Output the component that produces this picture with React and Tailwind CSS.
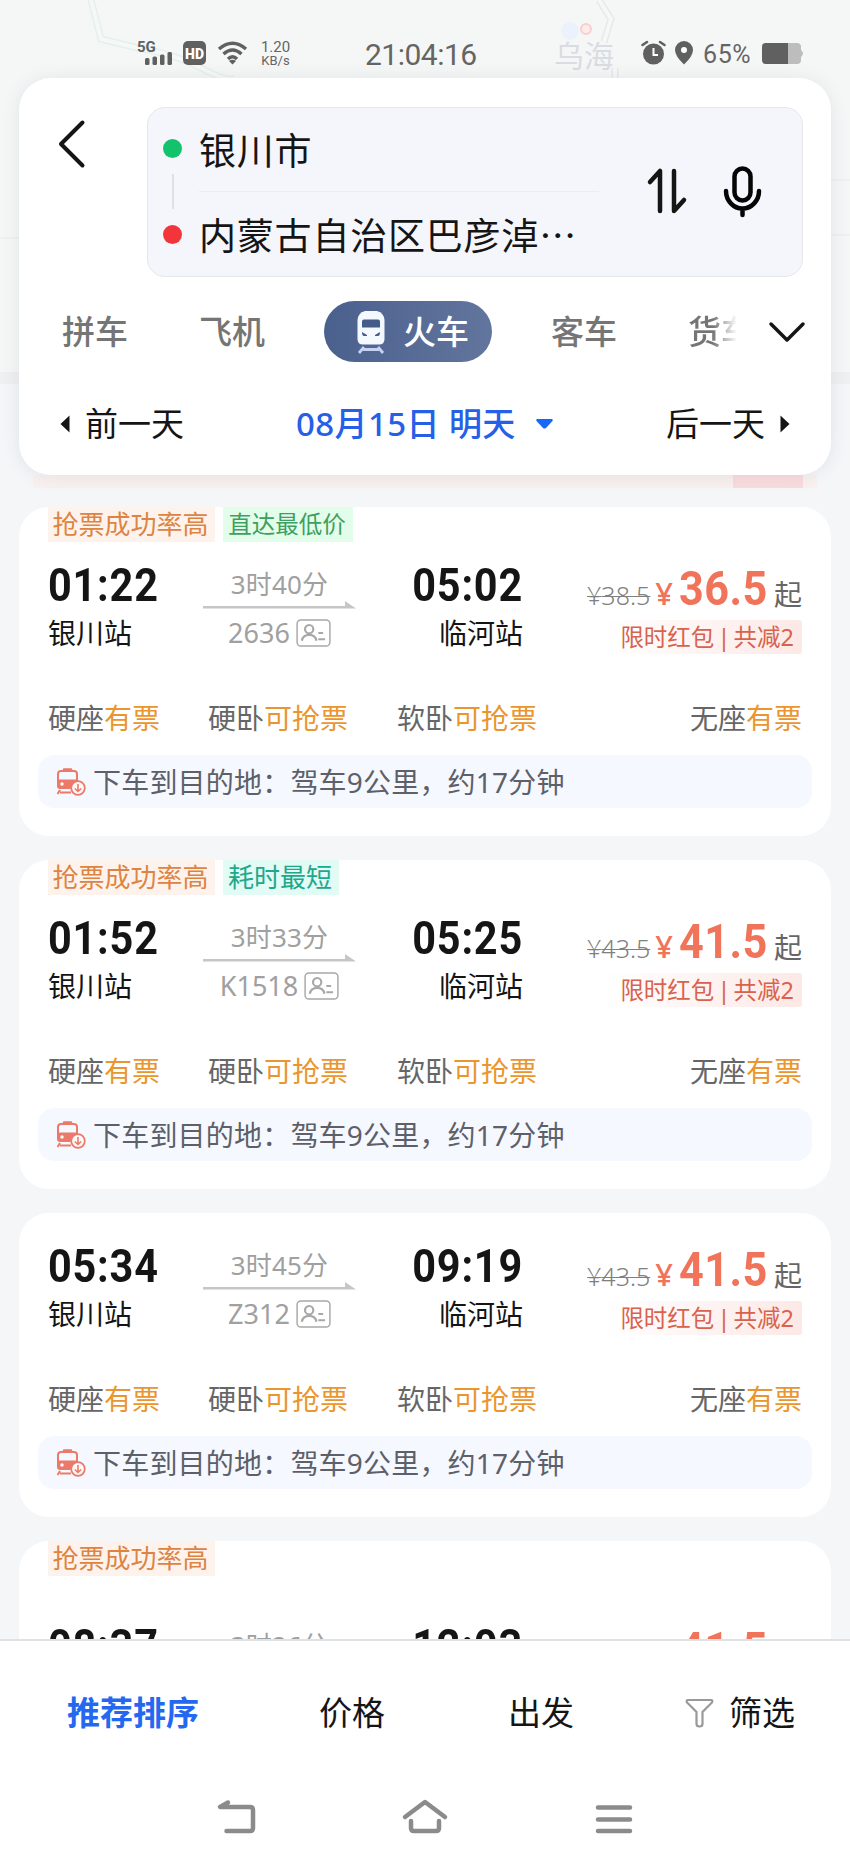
import React from 'react';

const GRAB_TAG = { text: '抢票成功率高', className: 'w-[167px] bg-[#fef3ec] pr-[2px] text-[#dd8443] text-[26px]' };

const seats = [
  { type: '硬座', status: '有票', className: '' },
  { type: '硬卧', status: '可抢票', className: 'ml-[48px]' },
  { type: '软卧', status: '可抢票', className: 'ml-[49px]' },
  { type: '无座', status: '有票', className: 'ml-auto' },
];

const trains = [
  {
    id: '2636',
    depart: '01:22',
    arrive: '05:02',
    duration: '3时40分',
    oldPrice: '38.5',
    price: '36.5',
    tags: [GRAB_TAG, { text: '直达最低价', className: 'w-[130px] bg-[#e2fdea] pr-[2px] text-[#3f9f5f] text-[23.5px]' }],
    spacing: 'h-[23px]',
  },
  {
    id: 'K1518',
    depart: '01:52',
    arrive: '05:25',
    duration: '3时33分',
    oldPrice: '43.5',
    price: '41.5',
    tags: [GRAB_TAG, { text: '耗时最短', className: 'w-[116px] bg-[#e2fbf5] pr-[2px] text-[#20a88c] text-[26px]' }],
    spacing: 'h-[23px]',
  },
  {
    id: 'Z312',
    depart: '05:34',
    arrive: '09:19',
    duration: '3时45分',
    oldPrice: '43.5',
    price: '41.5',
    tags: [],
    spacing: 'h-[33px]',
  },
  {
    id: 'K1178',
    depart: '08:37',
    arrive: '12:03',
    duration: '3时26分',
    oldPrice: '43.5',
    price: '41.5',
    tags: [GRAB_TAG],
    spacing: 'h-[50px]',
  },
];

function MapBackground() {
  return (
    <div className="absolute inset-x-0 top-0 h-[384px] bg-[#f5f7f7]">
      <svg className="absolute inset-0" width="850" height="384" fill="none">
        <path d="M91 0L101 39L138 48Q175 54 201 68T235 78" stroke="#e3f0eb" strokeWidth="7" />
        <path d="M91 0L101 39L138 48Q175 54 201 68T235 78" stroke="#f5f8f7" strokeWidth="4" />
        <path d="M599 0L611 19L604 42M615 68V80" stroke="#e3ebe9" strokeWidth="7" />
        <path d="M599 0L611 19L604 42M615 68V80" stroke="#f5f8f7" strokeWidth="4" />
        <path d="M831 180H850M831 235H850M0 238H19" stroke="#eff1f1" strokeWidth="2" />
        <rect y="372" width="850" height="12" fill="#eff0f2" />
        <circle cx="570" cy="31" r="9" fill="#ebf2fb" />
        <circle cx="586" cy="29" r="5" fill="#fdebea" stroke="#f6cfcf" strokeWidth="2" />
      </svg>
      <div className="absolute left-[554px] top-[37px] text-[30px] leading-[38px] text-[#dadce3]">乌海</div>
    </div>
  );
}

function StatusBar() {
  return (
    <div className="relative flex h-[78px] shrink-0 pt-[38px] text-[#656565]">
      <svg className="ml-[136px]" width="112" height="30" viewBox="136 38 112 30">
        <text x="137" y="52" fontFamily="Roboto, sans-serif" fontSize="15" fontWeight="700" fill="#606060">5G</text>
        <g fill="#606060">
          <rect x="145" y="58" width="4.500" height="7" rx="1.500" />
          <rect x="152.500" y="56.500" width="4.500" height="8.500" rx="1.500" />
          <rect x="160" y="54.500" width="4.500" height="10.500" rx="1.500" />
          <rect x="167.500" y="52" width="4.500" height="13" rx="1.500" />
          <rect x="183" y="41" width="23" height="24" rx="5" />
        </g>
        <text x="185" y="58.500" fontFamily="Roboto, sans-serif" fontSize="14" fontWeight="900" fill="#fff" textLength="19">HD</text>
        <g stroke="#606060" fill="none" strokeWidth="3.500">
          <path d="M219 49Q232.500 37.500 246 49" />
          <path d="M223.500 54Q232.500 46 241.500 54" />
          <path d="M228 59Q232.500 54.500 237 59" />
        </g>
        <path d="M229 61Q232.500 58.500 236 61L232.500 64.500Z" fill="#606060" />
      </svg>
      <div className="ml-[12px] w-[31px] text-center font-[Roboto] text-[15px] leading-[13px] whitespace-nowrap">
        <div className="pt-[3px]">1.20</div>
        <div className="text-[13px]">KB/s</div>
      </div>
      <div className="ml-[74px] w-[113px] font-[Roboto] text-[30px] leading-[33px] whitespace-nowrap tracking-[-0.5px]">21:04:16</div>
      <svg className="ml-[163px]" width="56" height="30" viewBox="641 38 56 30">
        <circle cx="653.500" cy="54" r="10.500" fill="#606060" />
        <path d="M642.500 45L647 42M660 42L664.500 45" stroke="#606060" strokeWidth="2.500" strokeLinecap="round" />
        <path d="M653.500 48V55H658" stroke="#fff" strokeWidth="2" fill="none" />
        <path d="M684 41A9 9 0 0 1 693 50Q693 56 684 64.500Q675 56 675 50A9 9 0 0 1 684 41Z" fill="#606060" />
        <circle cx="684" cy="50" r="3" fill="#fff" />
      </svg>
      <div className="ml-[6px] w-[51px] font-[Roboto] text-[25px] leading-[33px] tracking-[0.6px]">65%</div>
      <svg className="ml-[7px]" width="44" height="30" viewBox="760 38 44 30">
        <rect x="761" y="43" width="39" height="21" rx="4" fill="#bdbdbd" />
        <path d="M765 43H787V64H765A4 4 0 0 1 761 60V47A4 4 0 0 1 765 43Z" fill="#606060" />
        <path d="M800 50Q804 53.500 800 57Z" fill="#bdbdbd" />
      </svg>
    </div>
  );
}

function SearchHeader() {
  return (
    <header className="relative z-10 mx-[19px] flex h-[397px] shrink-0 flex-col rounded-[32px] bg-white shadow-[0_1px_18px_rgba(60,70,80,0.1)]">
      <div className="flex pt-[29px]">
        <svg className="mt-[12px] ml-[38px]" width="30" height="50" viewBox="0 0 30 50" fill="none">
          <path d="M25.500 3.500L4 25L25.500 46.500" stroke="#151515" strokeWidth="4" strokeLinecap="round" strokeLinejoin="round" />
        </svg>
        <div className="ml-[60px] flex h-[170px] w-[656px] rounded-[18px] border border-[#e6e7ea] bg-[#f5f6fb]">
          <div className="ml-[15px] flex w-[19px] flex-col items-center pt-[31px]">
            <div className="h-[19px] w-[19px] rounded-full bg-[#12c36c]" />
            <div className="mt-[16px] h-[35px] w-[2px] bg-[#dfe0e5]" />
            <div className="mt-[16px] h-[19px] w-[19px] rounded-full bg-[#f2353a]" />
          </div>
          <div className="ml-[17px] w-[400px] text-[37px] tracking-[0.8px] whitespace-nowrap text-[#151515]">
            <div className="h-[84px] border-b border-[#ebecf1] pt-[16px] leading-[54px]">银川市</div>
            <div className="pt-[17px] leading-[54px]">内蒙古自治区巴彦淖⋯</div>
          </div>
          <svg className="mt-[57px] ml-[47px]" width="118" height="54" viewBox="645 165 118 54" fill="none">
            <path d="M649 182L659 171V211M673 171V211L683 200" stroke="#151515" strokeWidth="4.500" strokeLinecap="round" strokeLinejoin="round" />
            <rect x="733.500" y="168.500" width="16" height="32" rx="8" stroke="#050505" strokeWidth="4.500" />
            <path d="M725 191A16.500 17.500 0 0 0 758 191M741.500 209V215" stroke="#050505" strokeWidth="4.500" strokeLinecap="round" />
          </svg>
        </div>
      </div>

      <nav className="mt-[24px] flex h-[61px] items-center text-[33px] font-medium whitespace-nowrap text-[#757575]">
        <div className="ml-[43px] w-[66px]">拼车</div>
        <div className="ml-[71px] w-[66px]">飞机</div>
        <div className="ml-[59px] flex h-[61px] w-[168px] items-center rounded-full bg-linear-to-r from-[#4a608d] to-[#62759d] text-white">
          <svg className="ml-[32px]" width="30" height="44" viewBox="0 0 30 44">
            <path d="M8 37L3 43M22 37L27 43M7 39.500H23" stroke="#c5d2f2" strokeWidth="2.800" />
            <path d="M9 1H21Q28 3 28.500 10V29Q28.500 34.500 23 34.500H7Q1.500 34.500 1.500 29V10Q2 3 9 1Z" fill="#f3f9ff" />
            <path d="M8 9.500H22Q24 9.500 24 11.500V17.500H6V11.500Q6 9.500 8 9.500ZM6 22L11 25V26H8Q6 26 6 22ZM24 22L19 25V26H22Q24 26 24 22Z" fill="#455b89" />
          </svg>
          <span className="ml-[17px]">火车</span>
        </div>
        <div className="ml-[59px] w-[66px]">客车</div>
        <div className="ml-[71px] w-[49px] overflow-hidden bg-linear-to-r from-[#757575] from-50% to-transparent bg-clip-text text-transparent">货车</div>
        <svg className="ml-[31px]" width="38" height="24" viewBox="0 0 38 24" fill="none">
          <path d="M3 4L19 20L35 4" stroke="#151515" strokeWidth="3.500" strokeLinecap="round" strokeLinejoin="round" />
        </svg>
      </nav>

      <div className="mt-[37px] flex h-[50px] items-center text-[33px] whitespace-nowrap text-[#151515]">
        <svg className="ml-[41px]" width="10" height="18" viewBox="0 0 10 18">
          <path d="M9.500 0.500V17.500L0.500 9Z" fill="#151515" />
        </svg>
        <span className="ml-[15px] w-[99px]">前一天</span>
        <div className="ml-[112px] flex w-[257px] items-center font-medium text-[#265fe8]">
          <span className="w-[222px] tracking-[0.4px]">08月15日 明天</span>
          <svg className="ml-[18px] shrink-0" width="17" height="10" viewBox="0 0 17 10">
            <path d="M1 0H16Q17.500 1 16 2.500L10 9Q8.500 10 7 9L1 2.500Q-0.500 1 1 0Z" fill="#1967f5" />
          </svg>
        </div>
        <span className="ml-[113px] w-[99px]">后一天</span>
        <svg className="ml-[15px]" width="10" height="18" viewBox="0 0 10 18">
          <path d="M0.500 0.500V17.500L9.500 9Z" fill="#151515" />
        </svg>
      </div>
    </header>
  );
}

function IdCardIcon() {
  return (
    <svg width="35" height="28" viewBox="0 0 36 29" fill="none" stroke="#a8a8a8">
      <rect x="1" y="1" width="34" height="27" rx="4" strokeWidth="1.500" />
      <circle cx="13.500" cy="10.500" r="4.300" strokeWidth="2.200" />
      <path d="M6 22.500Q7 16.500 13.500 16.500T21 22.500M23 14.500H28M23 21H30" strokeWidth="2.200" />
    </svg>
  );
}

function TrainArrivalIcon() {
  return (
    <svg width="30" height="28" viewBox="0 0 30 28" fill="none">
      <path d="M8 1.500H15" stroke="#ec7a6b" strokeWidth="2.500" strokeLinecap="round" />
      <path d="M2 12V6Q2 3 5 3H18Q21 3 21 6V12" stroke="#ec7a6b" strokeWidth="2" />
      <path d="M1 11.500H22V13Q15 15 14.500 21H4Q1 21 1 18Z" fill="#ec7a6b" />
      <circle cx="6" cy="16" r="1.700" fill="#fff" />
      <path d="M4 22L1.500 26M4 24.500H15" stroke="#ec7a6b" strokeWidth="2" />
      <circle cx="22" cy="20" r="6.800" fill="#fff8f8" stroke="#ec7a6b" strokeWidth="1.800" />
      <path d="M22 16V23.500M18.800 20.500L22 23.500L25.200 20.500" stroke="#ec7a6b" strokeWidth="1.600" />
    </svg>
  );
}

function TrainCard({ train }) {
  return (
    <section className="shrink-0 overflow-hidden rounded-[30px] bg-white">
      {train.tags.length > 0 && (
        <div className="flex h-[35px] gap-[8px] pl-[29px]">
          {train.tags.map((tag) => (
            <div key={tag.text} className={`${tag.className} flex items-center justify-center whitespace-nowrap`}>
              {tag.text}
            </div>
          ))}
        </div>
      )}
      <div className={train.spacing} />

      <div className="flex h-[84px] px-[29px] whitespace-nowrap text-[#151515]">
        <div className="w-[155px]">
          <div className="origin-left scale-x-90 font-[Roboto] text-[46px] leading-[40px] font-bold tracking-[0.9px]">{train.depart}</div>
          <div className="mt-[12px] text-[28px] leading-[32px]">银川站</div>
        </div>
        <div className="flex w-[153px] flex-col items-center text-[#a0a0a0]">
          <div className="mt-[4px] text-[26px] leading-[31px] tracking-[0.2px]">{train.duration}</div>
          <svg className="mt-px" width="153" height="8" viewBox="0 0 153 8">
            <path d="M0 5H142V0L153 7.500H0Z" fill="#c6c6c8" />
          </svg>
          <div className="mt-[8px] flex h-[32px] items-center gap-[6px] text-[27px] leading-[32px]">
            <span>{train.id}</span>
            <IdCardIcon />
          </div>
        </div>
        <div className="w-[167px] text-right">
          <div className="origin-right scale-x-90 font-[Roboto] text-[46px] leading-[40px] font-bold tracking-[0.9px]">{train.arrive}</div>
          <div className="mt-[12px] text-[28px] leading-[32px]">临河站</div>
        </div>
        <div className="ml-auto flex flex-col items-end">
          <div className="mt-[4px] flex h-[40px] items-baseline leading-[40px]">
            <span className="text-[25px] font-light text-[#808080] line-through decoration-1">¥{train.oldPrice}</span>
            <span className="ml-[5px] text-[31px] font-medium text-[#f0735a]">¥</span>
            <span className="-ml-[4px] origin-right scale-x-90 font-[Roboto] text-[48px] font-bold tracking-[0.6px] text-[#f0735a]">{train.price}</span>
            <span className="ml-[6px] text-[28px] text-[#666]">起</span>
          </div>
          <div className="mt-[11px] h-[35px] rounded-[3px] bg-linear-to-r from-white to-[#fce9e6] pr-[8px] pl-[16px] text-[23.5px] leading-[34px] [word-spacing:-3px] text-[#d9624e]">
            限时红包 | 共减2
          </div>
        </div>
      </div>

      <div className="mt-[53px] flex h-[32px] px-[29px] text-[28px] leading-[32px] whitespace-nowrap text-[#666]">
        {seats.map((seat) => (
          <div key={seat.type} className={seat.className}>
            {seat.type}
            <span className="text-[#ea9630]">{seat.status}</span>
          </div>
        ))}
      </div>

      <div className="mx-[19px] mt-[21px] mb-[28px] flex h-[53px] items-center rounded-[16px] bg-[#f5f8ff] pl-[18px]">
        <TrainArrivalIcon />
        <span className="ml-[7px] text-[28px] leading-[30px] tracking-[0.2px] whitespace-nowrap text-[#5d6068]">
          下车到目的地：驾车9公里，约17分钟
        </span>
      </div>
    </section>
  );
}

function SortBar() {
  return (
    <footer className="relative z-10 h-[231px] shrink-0 border-t-2 border-[#e0e1e3] bg-white">
      <div className="flex h-[143px] items-center text-[33px] whitespace-nowrap text-[#151515]">
        <span className="ml-[67px] w-[132px] font-bold text-[#2468f0]">推荐排序</span>
        <span className="ml-[120px] w-[66px]">价格</span>
        <span className="ml-[123px] w-[66px]">出发</span>
        <svg className="ml-[111px]" width="29" height="30" viewBox="0 0 29 30" fill="none">
          <path d="M3 2H26Q28 2 27 4.500L17.500 14V26Q17.500 28.500 14.500 28.500T11.500 26V14L2 4.500Q1 2 3 2Z" stroke="#999" strokeWidth="2.200" />
        </svg>
        <span className="ml-[15px] w-[66px]">筛选</span>
      </div>
      <div className="flex h-[84px] pt-[13px] text-[#8b8b8b]">
        <svg className="ml-[215px]" width="43" height="40" viewBox="215 1798 43 40" fill="none" stroke="currentColor" strokeWidth="4.500" strokeLinecap="round" strokeLinejoin="round">
          <path d="M228 1803.500L220 1808H250Q253 1808 253 1811V1829Q253 1832 250 1832H226.500" />
        </svg>
        <svg className="ml-[142px]" width="50" height="40" viewBox="400 1798 50 40" fill="none" stroke="currentColor" strokeWidth="4.500" strokeLinecap="round" strokeLinejoin="round">
          <path d="M405 1818L425 1803L445 1818M411 1822V1829Q411 1832 414 1832H436Q439 1832 439 1829V1822" />
        </svg>
        <svg className="ml-[144px]" width="40" height="40" viewBox="594 1798 40 40" stroke="currentColor" strokeWidth="4.500" strokeLinecap="round">
          <path d="M598 1808.500H630M598 1820.500H630M598 1832H630" />
        </svg>
      </div>
    </footer>
  );
}

export default function App() {
  return (
    <div className="relative flex h-[1870px] w-[850px] flex-col overflow-hidden bg-[#f4f6f8] font-['Noto_Sans','Noto_Sans_CJK_SC',sans-serif]">
      <MapBackground />
      <StatusBar />
      <SearchHeader />
      <main className="flex min-h-0 flex-1 flex-col gap-[24px] overflow-hidden px-[19px]">
        {/* bottom edge of the banner that has scrolled under the header */}
        <div className="mx-[14px] -mb-[5px] flex h-[13px] shrink-0 justify-end bg-[#f8f1ef] pr-[14px]">
          <div className="w-[70px] bg-[#fadcdf]" />
        </div>
        {trains.map((train) => (
          <TrainCard key={train.id} train={train} />
        ))}
      </main>
      <SortBar />
    </div>
  );
}
